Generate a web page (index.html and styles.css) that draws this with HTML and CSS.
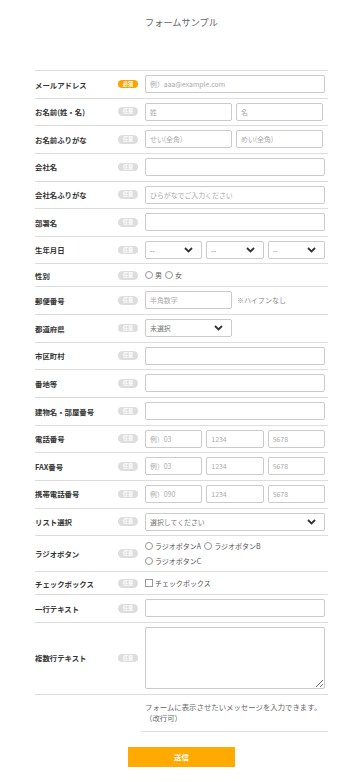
FILE: index.html
```html
<!DOCTYPE html>
<html>
<head>
  <meta charset="utf-8">
  <title>フォームサンプル</title>
  <link rel="stylesheet" href="styles.css">
</head>
<body>
  <div class="wrap">
    <h1 class="title">フォームサンプル</h1>

    <form class="form">
      <div class="row">
        <div class="label">メールアドレス</div>
        <div><span class="badge req">必須</span></div>
        <div class="field"><input type="text" placeholder="例）aaa@example.com"></div>
      </div>
      <div class="row">
        <div class="label">お名前(姓・名)</div>
        <div><span class="badge">任意</span></div>
        <div class="field two"><input type="text" placeholder="姓"><input type="text" placeholder="名"></div>
      </div>
      <div class="row">
        <div class="label">お名前ふりがな</div>
        <div><span class="badge">任意</span></div>
        <div class="field two"><input type="text" placeholder="せい(全角)"><input type="text" placeholder="めい(全角)"></div>
      </div>
      <div class="row">
        <div class="label">会社名</div>
        <div><span class="badge">任意</span></div>
        <div class="field"><input type="text"></div>
      </div>
      <div class="row">
        <div class="label">会社名ふりがな</div>
        <div><span class="badge">任意</span></div>
        <div class="field"><input type="text" placeholder="ひらがなでご入力ください"></div>
      </div>
      <div class="row">
        <div class="label">部署名</div>
        <div><span class="badge">任意</span></div>
        <div class="field"><input type="text"></div>
      </div>
      <div class="row">
        <div class="label">生年月日</div>
        <div><span class="badge">任意</span></div>
        <div class="field three">
          <select><option>--</option></select>
          <select><option>--</option></select>
          <select><option>--</option></select>
        </div>
      </div>
      <div class="row short">
        <div class="label">性別</div>
        <div><span class="badge">任意</span></div>
        <div class="field choice">
          <label><input type="radio" name="sex">男</label>
          <label><input type="radio" name="sex">女</label>
        </div>
      </div>
      <div class="row">
        <div class="label">郵便番号</div>
        <div><span class="badge">任意</span></div>
        <div class="field two"><input type="text" placeholder="半角数字"><span class="note">※ハイフンなし</span></div>
      </div>
      <div class="row">
        <div class="label">都道府県</div>
        <div><span class="badge">任意</span></div>
        <div class="field two"><select><option>未選択</option></select></div>
      </div>
      <div class="row">
        <div class="label">市区町村</div>
        <div><span class="badge">任意</span></div>
        <div class="field"><input type="text"></div>
      </div>
      <div class="row">
        <div class="label">番地等</div>
        <div><span class="badge">任意</span></div>
        <div class="field"><input type="text"></div>
      </div>
      <div class="row">
        <div class="label">建物名・部屋番号</div>
        <div><span class="badge">任意</span></div>
        <div class="field"><input type="text"></div>
      </div>
      <div class="row">
        <div class="label">電話番号</div>
        <div><span class="badge">任意</span></div>
        <div class="field three"><input type="text" placeholder="例）03"><input type="text" placeholder="1234"><input type="text" placeholder="5678"></div>
      </div>
      <div class="row">
        <div class="label">FAX番号</div>
        <div><span class="badge">任意</span></div>
        <div class="field three"><input type="text" placeholder="例）03"><input type="text" placeholder="1234"><input type="text" placeholder="5678"></div>
      </div>
      <div class="row">
        <div class="label">携帯電話番号</div>
        <div><span class="badge">任意</span></div>
        <div class="field three"><input type="text" placeholder="例）090"><input type="text" placeholder="1234"><input type="text" placeholder="5678"></div>
      </div>
      <div class="row">
        <div class="label">リスト選択</div>
        <div><span class="badge">任意</span></div>
        <div class="field"><select><option>選択してください</option></select></div>
      </div>
      <div class="row radios">
        <div class="label">ラジオボタン</div>
        <div><span class="badge">任意</span></div>
        <div class="field choice">
          <label><input type="radio" name="rb">ラジオボタンA</label>
          <label><input type="radio" name="rb">ラジオボタンB</label>
          <label><input type="radio" name="rb">ラジオボタンC</label>
        </div>
      </div>
      <div class="row short">
        <div class="label">チェックボックス</div>
        <div><span class="badge">任意</span></div>
        <div class="field choice">
          <label><input type="checkbox">チェックボックス</label>
        </div>
      </div>
      <div class="row">
        <div class="label">一行テキスト</div>
        <div><span class="badge">任意</span></div>
        <div class="field"><input type="text"></div>
      </div>
      <div class="row last">
        <div class="label">複数行テキスト</div>
        <div><span class="badge">任意</span></div>
        <div class="field"><textarea></textarea></div>
      </div>

      <div class="message">フォームに表示させたいメッセージを入力できます。<br>（改行可）</div>

      <div class="submit"><button type="button">送信</button></div>
    </form>
  </div>
</body>
</html>
```

FILE: styles.css
```css
body {
  margin: 0;
  background: #fff;
  font-family: "Noto Sans CJK JP", "Noto Sans", sans-serif;
  color: #333;
}

.wrap {
  width: 293px;
  margin-left: 35px;
}

.title {
  margin: 0;
  padding-top: 16px;
  height: 70px;
  box-sizing: border-box;
  font-size: 9.2px;
  line-height: 13px;
  font-weight: normal;
  color: #666;
  text-align: center;
}

.form {
  margin: 0;
}

.row {
  display: grid;
  grid-template-columns: 83px 27px 1fr;
  align-items: center;
  border-top: 1px solid #dcdcdc;
  padding: 4px 3px 4.65px 0;
}
.row.short {
  padding-top: 4px;
  padding-bottom: 4px;
}
.row.radios {
  padding-top: 2.5px;
  padding-bottom: 2.5px;
}
.row.last {
  border-bottom: 1px solid #dcdcdc;
}

.label {
  font-size: 7.4px;
  font-weight: bold;
  color: #333;
  white-space: nowrap;
}

.badge {
  display: block;
  width: 20px;
  height: 8.6px;
  border-radius: 5px;
  background: #ddd;
  color: #fff;
  font-size: 5.2px;
  line-height: 8.6px;
  font-weight: bold;
  text-align: center;
}
.badge.req {
  background: #f9a300;
}

.field {
  display: flex;
  gap: 4px;
  align-items: center;
}
.field input[type=text],
.field select,
.field textarea {
  box-sizing: border-box;
  width: 100%;
  height: 18px;
  margin: 0;
  padding: 0 0 0 4px;
  border: 1px solid #cbcbcb;
  border-radius: 2px;
  background: #fff;
  font-family: inherit;
  font-size: 6.9px;
  color: #888;
  outline: none;
}
.field input::placeholder {
  color: #aaa;
}
.field.two > * {
  width: 87px;
  flex: 0 0 87px;
}
.field.two .note {
  width: auto;
  flex: none;
  font-size: 7px;
  color: #888;
  margin-left: 1px;
}
.field.three > * {
  flex: 1 1 0;
  min-width: 0;
}

.field select {
  -webkit-appearance: none;
  appearance: none;
  background-image: url("data:image/svg+xml,%3Csvg xmlns='http://www.w3.org/2000/svg' width='9' height='6' viewBox='0 0 9 6'%3E%3Cpath d='M1 1l3.5 3.5L8 1' fill='none' stroke='%23333' stroke-width='1.8'/%3E%3C/svg%3E");
  background-repeat: no-repeat;
  background-position: right 8px center;
  background-size: 9px 6px;
  color: #777;
}

.field textarea {
  display: block;
  height: 62px;
  resize: vertical;
  padding: 3px;
}

.choice {
  flex-wrap: wrap;
  gap: 0 3px;
  font-size: 7px;
  line-height: 14px;
  color: #555;
}
.radios .choice {
  line-height: 15px;
  margin-right: 40px;
}
.choice label {
  display: flex;
  align-items: center;
  gap: 2px;
  white-space: nowrap;
}
.choice input {
  -webkit-appearance: none;
  appearance: none;
  width: 8px;
  height: 8px;
  margin: 0;
  border: 1px solid #999;
  border-radius: 50%;
  background: #fff;
}
.choice input[type=checkbox] {
  border-radius: 0;
}

.message {
  margin-left: 106px;
  padding: 6px 3px 8px 4px;
  border-bottom: 1px solid #dcdcdc;
  font-size: 7.4px;
  line-height: 11px;
  color: #666;
}

.submit {
  display: flex;
  justify-content: center;
  padding-top: 15px;
}
.submit button {
  display: block;
  width: 107px;
  height: 20px;
  border: none;
  background: #ffaa00;
  color: #fff;
  font-family: inherit;
  font-size: 7.4px;
  font-weight: bold;
  cursor: pointer;
}
```
